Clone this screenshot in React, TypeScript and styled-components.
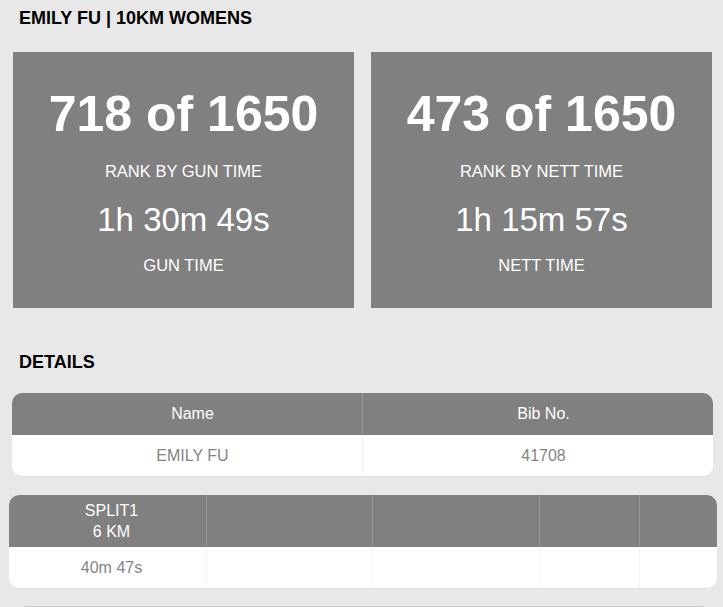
import React from "react";
import styled, { createGlobalStyle } from "styled-components";

const GlobalStyle = createGlobalStyle`
  html, body {
    margin: 0;
    padding: 0;
    background: #e8e8e8;
    font-family: "Liberation Sans", Arial, Helvetica, sans-serif;
  }
  * { box-sizing: border-box; }
`;

const Page = styled.div`
  display: flex;
  flex-direction: column;
  height: 607px;
  overflow: hidden;
  & > * { flex-shrink: 0; }
`;

const Heading = styled.h2<{ $top: number }>`
  margin: ${(p) => p.$top}px 0 0 19px;
  font-size: 18px;
  line-height: 18px;
  font-weight: 700;
  color: #000;
`;

const Cards = styled.div`
  display: grid;
  grid-template-columns: 341px 341px;
  column-gap: 17px;
  margin: 25px 0 0 13px;
`;

const Card = styled.div`
  background: #808080;
  color: #fff;
  height: 256px;
  display: flex;
  flex-direction: column;
  align-items: center;
  padding-top: 37px;
  text-align: center;
`;

const Rank = styled.div`
  font-size: 50px;
  line-height: 50px;
  font-weight: 700;
`;

const Label = styled.div<{ $gap: number }>`
  margin-top: ${(p) => p.$gap}px;
  font-size: 16.5px;
  line-height: 17px;
`;

const Time = styled.div`
  margin-top: 23px;
  font-size: 33px;
  line-height: 33px;
`;

const Table = styled.div<{ $cols: string; $left: number; $width: number; $top: number }>`
  display: grid;
  grid-template-columns: ${(p) => p.$cols};
  width: ${(p) => p.$width}px;
  margin: ${(p) => p.$top}px 0 0 ${(p) => p.$left}px;
  border-radius: 10px;
  overflow: hidden;
  background: #fff;
  border-bottom: 1px solid #dedede;
`;

const HeadCell = styled.div<{ $h: number; $pad: number; $first?: boolean }>`
  height: ${(p) => p.$h}px;
  background: #808080;
  color: #fff;
  font-size: 16px;
  line-height: 20.5px;
  display: flex;
  align-items: center;
  justify-content: center;
  text-align: center;
  padding-left: ${(p) => p.$pad}px;
  padding-top: 1px;
  border-left: ${(p) => (p.$first ? "none" : "1px solid #979797")};
`;

const BodyCell = styled.div<{ $pad: number; $first?: boolean }>`
  height: 41px;
  color: #858585;
  font-size: 16px;
  display: flex;
  align-items: center;
  justify-content: center;
  padding-left: ${(p) => p.$pad}px;
  padding-top: 1px;
  border-left: ${(p) => (p.$first ? "none" : "1px solid #f3f3f3")};
`;

const NextBlock = styled.div`
  margin: 17px 0 0 17px;
  width: 694px;
  height: 10px;
  border-top: 1px solid #c9c9c9;
  border-radius: 10px 10px 0 0;
  background: #e6e6e6;
`;

const results = [
  { rank: "718 of 1650", rankLabel: "RANK BY GUN TIME", time: "1h 30m 49s", timeLabel: "GUN TIME" },
  { rank: "473 of 1650", rankLabel: "RANK BY NETT TIME", time: "1h 15m 57s", timeLabel: "NETT TIME" },
];

const splitCols = [197, 166, 167, 100, 78];

export default function App() {
  return (
    <>
      <GlobalStyle />
      <Page>
        <Heading $top={9}>EMILY FU | 10KM WOMENS</Heading>
        <Cards>
          {results.map((r) => (
            <Card key={r.rank}>
              <Rank>{r.rank}</Rank>
              <Label $gap={24}>{r.rankLabel}</Label>
              <Time>{r.time}</Time>
              <Label $gap={21}>{r.timeLabel}</Label>
            </Card>
          ))}
        </Cards>
        <Heading $top={45}>DETAILS</Heading>
        <Table $cols="350px 351px" $left={12} $width={701} $top={22}>
          <HeadCell $h={42} $pad={11} $first>Name</HeadCell>
          <HeadCell $h={42} $pad={11}>Bib No.</HeadCell>
          <BodyCell $pad={11} $first>EMILY FU</BodyCell>
          <BodyCell $pad={11}>41708</BodyCell>
        </Table>
        <Table
          $cols={splitCols.map((c) => `${c}px`).join(" ")}
          $left={9}
          $width={708}
          $top={18}
        >
          <HeadCell $h={52} $pad={8} $first>
            SPLIT1
            <br />6 KM
          </HeadCell>
          {splitCols.slice(1).map((c) => (
            <HeadCell key={`h${c}`} $h={52} $pad={0} />
          ))}
          <BodyCell $pad={8} $first>40m 47s</BodyCell>
          {splitCols.slice(1).map((c) => (
            <BodyCell key={`b${c}`} $pad={0} />
          ))}
        </Table>
        <NextBlock />
      </Page>
    </>
  );
}
